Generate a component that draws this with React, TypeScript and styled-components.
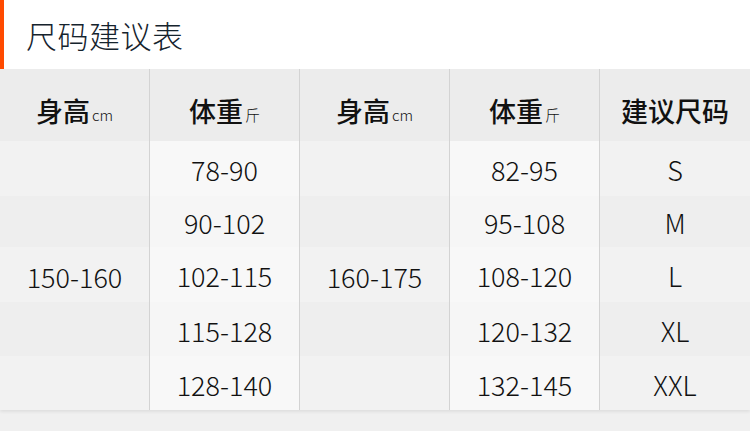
import * as React from "react";
import styled, { createGlobalStyle } from "styled-components";

const GlobalStyle = createGlobalStyle`
  body {
    margin: 0;
    background: #f0f0f0;
    font-family: "Noto Sans CJK SC", "Noto Sans", sans-serif;
  }
`;

const Page = styled.div`
  width: 750px;
  height: 431px;
  background: #f0f0f0;
  overflow: hidden;
`;

const TitleBar = styled.div`
  height: 69px;
  display: flex;
  align-items: center;
  padding-left: 22px;
  background: #fff;
  border-left: 4px solid #ff4a00;
  font-size: 31px;
  font-weight: 300;
  color: #15232d;
  letter-spacing: 0.5px;
`;

const Table = styled.div`
  display: grid;
  grid-template-columns: repeat(5, 150px);
  grid-template-rows: 72px 55px 51px 55px 54px 54px;
  color: #111;
  box-shadow: 0 2px 3px rgba(0, 0, 0, 0.07);
`;

const Stripe = styled.div<{ $dark: boolean; $row: number }>`
  grid-column: 1 / -1;
  grid-row: ${(p) => p.$row};
  background: ${(p) => (p.$dark ? "#eeeeee" : "#f2f2f2")};
`;

const Cell = styled.div<{ $col: number; $row: number; $span?: number; $light?: boolean }>`
  grid-column: ${(p) => p.$col};
  grid-row: ${(p) => (p.$span ? `${p.$row} / span ${p.$span}` : p.$row)};
  display: flex;
  align-items: center;
  justify-content: center;
  font-size: 27px;
  font-weight: 300;
  padding-top: 2px;
  background: ${(p) => (p.$light ? "rgba(255, 255, 255, 0.45)" : "transparent")};
  border-right: ${(p) => (p.$col < 5 ? "1px solid #d3d3d3" : "none")};
`;

const HeadCell = styled(Cell)`
  background: #ececec;
  font-size: 27px;
  font-weight: 500;
  padding-top: 10px;
`;

const Unit = styled.span`
  font-size: 15px;
  font-weight: 300;
  margin-left: 2px;
  margin-top: 8px;
`;

const heights = ["150-160", "160-175"];
const weightsA = ["78-90", "90-102", "102-115", "115-128", "128-140"];
const weightsB = ["82-95", "95-108", "108-120", "120-132", "132-145"];
const sizes = ["S", "M", "L", "XL", "XXL"];

export default function App() {
  return (
    <Page>
      <GlobalStyle />
      <TitleBar>尺码建议表</TitleBar>
      <Table>
        {[0, 1].map((g) => (
          <React.Fragment key={`h${g}`}>
            <HeadCell $col={g * 2 + 1} $row={1}>
              身高<Unit>cm</Unit>
            </HeadCell>
            <HeadCell $col={g * 2 + 2} $row={1}>
              体重<Unit>斤</Unit>
            </HeadCell>
          </React.Fragment>
        ))}
        <HeadCell $col={5} $row={1}>
          建议尺码
        </HeadCell>

        {sizes.map((_, i) => (
          <Stripe key={`s${i}`} $row={i + 2} $dark={i % 2 === 1} />
        ))}

        {heights.map((h, g) => (
          <Cell key={h} $col={g * 2 + 1} $row={2} $span={5}>
            {h}
          </Cell>
        ))}
        {weightsA.map((w, i) => (
          <Cell key={w} $col={2} $row={i + 2} $light>
            {w}
          </Cell>
        ))}
        {weightsB.map((w, i) => (
          <Cell key={w} $col={4} $row={i + 2} $light>
            {w}
          </Cell>
        ))}
        {sizes.map((s, i) => (
          <Cell key={s} $col={5} $row={i + 2}>
            {s}
          </Cell>
        ))}
      </Table>
    </Page>
  );
}
